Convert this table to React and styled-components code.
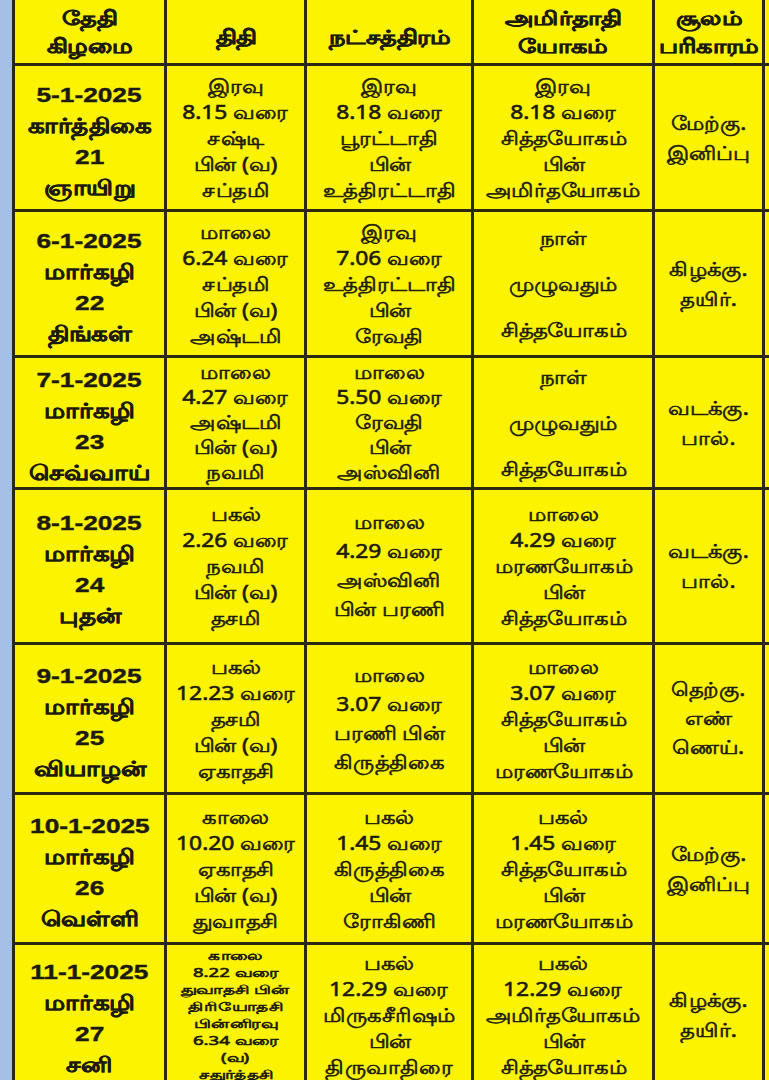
import React from 'react';
import styled, { createGlobalStyle } from 'styled-components';

const GlobalStyle = createGlobalStyle`
    html, body {
        margin: 0;
        padding: 0;
        overflow: hidden;
        background: #a6bfe6;
    }
`

const header = [
    ['தேதி', 'கிழமை'],
    ['திதி'],
    ['நட்சத்திரம்'],
    ['அமிர்தாதி', 'யோகம்'],
    ['சூலம்', 'பரிகாரம்'],
]

// each row: date, thithi, natchathiram, yogam, soolam
const rows = [
    {
        date: ['5-1-2025', 'கார்த்திகை', '21', 'ஞாயிறு'],
        thithi: ['இரவு', '8.15 வரை', 'சஷ்டி', 'பின் (வ)', 'சப்தமி'],
        star: ['இரவு', '8.18 வரை', 'பூரட்டாதி', 'பின்', 'உத்திரட்டாதி'],
        yogam: ['இரவு', '8.18 வரை', 'சித்தயோகம்', 'பின்', 'அமிர்தயோகம்'],
        soolam: ['மேற்கு.', 'இனிப்பு'],
    },
    {
        date: ['6-1-2025', 'மார்கழி', '22', 'திங்கள்'],
        thithi: ['மாலை', '6.24 வரை', 'சப்தமி', 'பின் (வ)', 'அஷ்டமி'],
        star: ['இரவு', '7.06 வரை', 'உத்திரட்டாதி', 'பின்', 'ரேவதி'],
        yogam: ['நாள்', 'முழுவதும்', 'சித்தயோகம்'],
        wide: true,
        soolam: ['கிழக்கு.', 'தயிர்.'],
    },
    {
        date: ['7-1-2025', 'மார்கழி', '23', 'செவ்வாய்'],
        thithi: ['மாலை', '4.27 வரை', 'அஷ்டமி', 'பின் (வ)', 'நவமி'],
        star: ['மாலை', '5.50 வரை', 'ரேவதி', 'பின்', 'அஸ்வினி'],
        yogam: ['நாள்', 'முழுவதும்', 'சித்தயோகம்'],
        wide: true,
        tight: true,
        soolam: ['வடக்கு.', 'பால்.'],
    },
    {
        date: ['8-1-2025', 'மார்கழி', '24', 'புதன்'],
        thithi: ['பகல்', '2.26 வரை', 'நவமி', 'பின் (வ)', 'தசமி'],
        star: ['மாலை', '4.29 வரை', 'அஸ்வினி', 'பின் பரணி'],
        yogam: ['மாலை', '4.29 வரை', 'மரணயோகம்', 'பின்', 'சித்தயோகம்'],
        soolam: ['வடக்கு.', 'பால்.'],
    },
    {
        date: ['9-1-2025', 'மார்கழி', '25', 'வியாழன்'],
        thithi: ['பகல்', '12.23 வரை', 'தசமி', 'பின் (வ)', 'ஏகாதசி'],
        star: ['மாலை', '3.07 வரை', 'பரணி பின்', 'கிருத்திகை'],
        yogam: ['மாலை', '3.07 வரை', 'சித்தயோகம்', 'பின்', 'மரணயோகம்'],
        soolam: ['தெற்கு.', 'எண்', 'ணெய்.'],
    },
    {
        date: ['10-1-2025', 'மார்கழி', '26', 'வெள்ளி'],
        thithi: ['காலை', '10.20 வரை', 'ஏகாதசி', 'பின் (வ)', 'துவாதசி'],
        star: ['பகல்', '1.45 வரை', 'கிருத்திகை', 'பின்', 'ரோகிணி'],
        yogam: ['பகல்', '1.45 வரை', 'சித்தயோகம்', 'பின்', 'மரணயோகம்'],
        soolam: ['மேற்கு.', 'இனிப்பு'],
    },
    {
        date: ['11-1-2025', 'மார்கழி', '27', 'சனி'],
        thithi: ['காலை', '8.22 வரை', 'துவாதசி பின்', 'திரியோதசி', 'பின்னிரவு', '6.34 வரை', '(வ)', 'சதுர்த்தசி'],
        small: true,
        star: ['பகல்', '12.29 வரை', 'மிருகசீரிஷம்', 'பின்', 'திருவாதிரை'],
        yogam: ['பகல்', '12.29 வரை', 'அமிர்தயோகம்', 'பின்', 'சித்தயோகம்'],
        soolam: ['கிழக்கு.', 'தயிர்.'],
        top: -6,
    },
]

function Lines({ lines }) {
    return lines.map((line, i) => <Line key={i}>{line}</Line>)
}

function App() {
    return (
        <Page>
            <GlobalStyle />
            <Sheet>
                {header.map((lines, i) => (
                    <HeadCell key={'h' + i} single={lines.length === 1}>
                        <Lines lines={lines} />
                    </HeadCell>
                ))}
                <HeadCell />

                {rows.map((row, i) => {
                    const lh = row.tight ? 25 : 26
                    return (
                        <React.Fragment key={i}>
                            <DateCell><Lines lines={row.date} /></DateCell>
                            {row.small ? (
                                <Cell size={12} lh={17} sx={1.55}><Lines lines={row.thithi} /></Cell>
                            ) : (
                                <Cell lh={lh}><Lines lines={row.thithi} /></Cell>
                            )}
                            <Cell lh={row.star.length === 4 ? 29 : lh} top={row.top}>
                                <Lines lines={row.star} />
                            </Cell>
                            <Cell lh={row.wide ? 46 : lh} top={row.top}>
                                <Lines lines={row.yogam} />
                            </Cell>
                            <Cell lh={row.soolam.length === 3 ? 29 : 30}>
                                <Lines lines={row.soolam} />
                            </Cell>
                            <Cell />
                        </React.Fragment>
                    )
                })}
            </Sheet>
        </Page>
    )
}

const Page = styled.div`
    height: 1080px;
    padding-left: 12px;
    background: #a6bfe6;
    overflow: hidden;
`

const Sheet = styled.div`
    display: grid;
    grid-template-columns: 149px 137px 164px 178px 107px 30px;
    grid-template-rows: 63px 143px 143px 129px 152px 147px 147px 140px;
    gap: 3px;
    padding-left: 3px;
    background: #2b2912;
    width: max-content;
`

const Line = styled.div``

const Cell = styled.div`
    background: #fcf300;
    color: #1d1b0c;
    display: flex;
    flex-direction: column;
    align-items: center;
    justify-content: center;
    text-align: center;
    font-family: "Noto Sans", "Liberation Sans", sans-serif;
    font-size: ${p => p.size || 19}px;
    line-height: ${p => p.lh || 26}px;
    padding-top: ${p => p.top || 0}px;
    -webkit-text-stroke: ${p => p.stroke || 0.6}px currentColor;
    white-space: nowrap;
    overflow: hidden;

    ${Line} {
        transform: scaleX(${p => p.sx || 1.2});
    }
`

const HeadCell = styled(Cell).attrs({ size: 20, lh: 28, sx: 1.28, stroke: 0.5 })`
    font-weight: bold;
    padding-top: ${p => (p.single ? 10 : 1)}px;
`

const DateCell = styled(Cell).attrs({ size: 21, lh: 31, sx: 1.25, stroke: 0.4 })`
    font-family: "Liberation Sans", "Noto Sans", sans-serif;
    font-weight: bold;
    padding-top: 6px;
`

export default App;
